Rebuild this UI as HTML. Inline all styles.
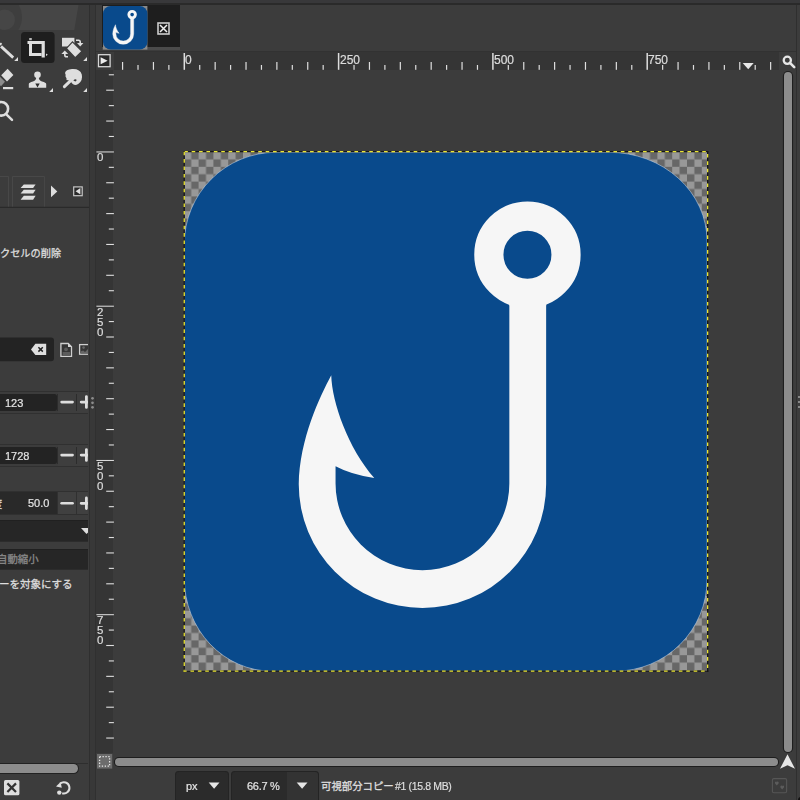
<!DOCTYPE html>
<html><head><meta charset="utf-8"><title>GIMP</title>
<style>
html,body{margin:0;padding:0;background:#3c3c3c;}
#r{position:relative;width:800px;height:800px;overflow:hidden;background:#3c3c3c;font-family:"Liberation Sans",sans-serif;}
#r div,#r svg{position:absolute;display:block;}
#r .t{white-space:nowrap;will-change:transform;-webkit-text-stroke:0.2px currentColor;}
</style></head><body><div id="r">
<div style="left:0px;top:0px;width:800px;height:3.3px;background:#38383a;"></div>
<div style="left:0px;top:3.2px;width:800px;height:1.5px;background:#2a2a2a;"></div>
<svg style="left:0px;top:4.5px;" width="90" height="25.5" viewBox="0 0 90 25.5"><path d="M0 0H78.5L74.2 25.5H0Z" fill="#464646"/><path d="M0 0H18.8A24.4 24.4 0 0 1 18 25.5H0Z" fill="#3e3e3e"/><circle cx="4.8" cy="14.7" r="10.2" fill="#464646"/></svg>
<svg style="left:0px;top:30px;" width="89" height="95" viewBox="0 30 89 95">
<rect x="21" y="32" width="33.6" height="31" rx="3.5" fill="#1e1e1e"/>
<!-- pencil/line -->
<path d="M1 46.4L13.2 57.6" stroke="#dedede" stroke-width="2.8" fill="none"/>
<path d="M-1 45.2L1.6 43.2" stroke="#dedede" stroke-width="2" fill="none"/>
<path d="M18 57V61H14.2Z" fill="#dedede"/>
<!-- crop -->
<rect x="29.2" y="38" width="2.6" height="2.2" fill="#b8b8b8"/>
<path d="M27.5 41H44.8V57.6H41.6V44H27.5Z" fill="#dedede"/>
<path d="M29 44H32V53H41.6V56H29Z" fill="#dedede"/>
<path d="M46 53.4L47.8 54.7L46 56Z" fill="#dedede"/>
<!-- transform -->
<rect x="62" y="37.8" width="12.4" height="8.7" fill="#dedede"/>
<path d="M72.5 41.8L82 51.3L75.3 57.8L66.4 48.4Z" fill="#dedede" stroke="#3c3c3c" stroke-width="1.2"/>
<path d="M76 40.2H78.6Q80.2 40.2 80.2 42V43.2" stroke="#dedede" stroke-width="1.6" fill="none"/>
<path d="M77 43H83.4L80.2 46.4Z" fill="#dedede"/>
<path d="M68 56.8H66.6Q64.8 56.8 64.8 55V53.8" stroke="#dedede" stroke-width="1.6" fill="none"/>
<path d="M61.4 54H68.2L64.8 50.6Z" fill="#dedede"/>
<path d="M87 57V61H83.2Z" fill="#dedede"/>
<!-- eraser -->
<path d="M7.6 68.8L13.4 75L7 81.4L1.2 75.2Z" fill="#dedede"/>
<path d="M-1 77L0.2 77L5 81.8L1.2 86L-1 85Z" fill="#8c8c8c"/>
<rect x="3" y="87" width="10.2" height="2.2" fill="#dedede"/>
<!-- stamp -->
<circle cx="37.5" cy="74.7" r="3.3" fill="#dedede"/>
<path d="M36.1 77Q36.6 80.4 33 81.5Q28.8 82.5 28.8 84V87.8H46.2V84Q46.2 82.5 42 81.5Q38.4 80.4 38.9 77Z" fill="#dedede"/>
<path d="M35.3 83.6H39.7L37.5 87.4Z" fill="#2a2a2a"/>
<path d="M53 88V92H49.2Z" fill="#dedede"/>
<!-- smudge -->
<path d="M65 73Q65.5 69.5 72 69Q80 68.5 81.8 74.5Q83 80.5 78.5 83.8Q74.5 86.3 72.2 83.5L70 80.5L66.5 80Q67 78 65.5 76.5Q66 74.5 65 73Z" fill="#dedede"/>
<path d="M64.4 86.6L73 78.4" stroke="#dedede" stroke-width="3" stroke-linecap="round" fill="none"/>
<path d="M73.4 80.6Q74.8 78.6 76.4 79.6Q77 81 75.4 81.6Z" fill="#3c3c3c"/>
<path d="M87 88V92H83.2Z" fill="#dedede"/>
<!-- zoom -->
<circle cx="1.3" cy="108.8" r="6.8" stroke="#dedede" stroke-width="2.6" fill="none"/>
<path d="M6.6 114.6L12 119.8" stroke="#dedede" stroke-width="2.5" stroke-linecap="round" fill="none"/>
</svg>
<div style="left:89px;top:4.5px;width:1px;height:795.5px;background:#2f2f2f;"></div>
<div style="left:90px;top:4.5px;width:5.3px;height:795.5px;background:#383838;"></div>
<div style="left:95.3px;top:4.5px;width:0.9px;height:795.5px;background:#303030;"></div>
<svg style="left:0px;top:170px;" width="89" height="45" viewBox="0 170 89 45">
<path d="M0 176.5H8.5V207" stroke="#484848" stroke-width="1" fill="none"/>
<path d="M12.5 207V176.5H44.4V207" stroke="#484848" stroke-width="1" fill="none"/>
<path d="M0 207.3H89" stroke="#2a2a2a" stroke-width="1.2"/>
<path d="M23.8 184.4H35.6L33.1 188.1H20.6Z" fill="#dedede"/>
<path d="M23.8 189.7H35.6L33.1 193.5H20.6Z" fill="#dedede"/>
<path d="M23.8 195.7H35.6L33.1 199.7H20.6Z" fill="#dedede"/>
<path d="M51 185.6L57.3 191.4L51 197.3Z" fill="#dedede"/>
<rect x="73.7" y="186.9" width="8.5" height="8.8" fill="#2a2a2a" stroke="#c8c8c8" stroke-width="1.2"/>
<path d="M75.6 191.3L80.4 188V194.6Z" fill="#dedede"/>
</svg>
<svg style="left:0.2px;top:246.17999999999998px;overflow:visible;" width="63" height="15" viewBox="0 -11.22 63 15"><text x="0" y="0" font-size="10.2" font-family="&quot;Liberation Sans&quot;, &quot;Noto Sans CJK JP&quot;, sans-serif" fill="#dcdcdc" stroke="#dcdcdc" stroke-width="0.3">クセルの削除</text></svg>
<svg style="left:0px;top:335px;" width="88" height="30" viewBox="0 335 88 30">
<path d="M0 337.5H51A3 3 0 0 1 54 340.5V358.3A3 3 0 0 1 51 361.3H0Z" fill="#232323"/>
<path d="M31 349.4L35.4 343.8H46.2V355H35.4Z" fill="#dedede"/>
<path d="M38.4 347.2L42.8 351.6M42.8 347.2L38.4 351.6" stroke="#232323" stroke-width="1.5"/>
<path d="M60.9 343.5H68.2L71.5 346.8V356.3H60.9Z" fill="#353535" stroke="#cfcfcf" stroke-width="1.3"/>
<path d="M68 343.3V347H71.7Z" fill="#d8d8d8"/>
<rect x="62.6" y="352" width="7.4" height="3.4" fill="#5c5c5c"/>
<circle cx="66" cy="349.3" r="1.9" fill="#5c5c5c"/>
<rect x="79.6" y="344.6" width="12" height="9.6" fill="#353535" stroke="#cfcfcf" stroke-width="1.3"/>
<circle cx="83.6" cy="347.6" r="1.3" fill="#666"/>
<path d="M80.6 353.4V351.6L83.2 350.6L85 352L88.5 348.6V353.4Z" fill="#666"/>
</svg>
<div style="left:0px;top:390.79999999999995px;width:88px;height:1.1px;background:#303030;"></div>
<div style="left:0px;top:412.9px;width:88px;height:1.1px;background:#303030;"></div>
<div style="left:57.9px;top:391.9px;width:30.1px;height:21px;background:#3e3e3e;"></div>
<div style="left:56.9px;top:393.79999999999995px;width:1px;height:17.4px;background:#2c2c2c;"></div>
<div style="left:76.1px;top:393.79999999999995px;width:1px;height:17.4px;background:#2c2c2c;"></div>
<div style="left:0px;top:393.79999999999995px;width:57px;height:17.4px;background:#232323;border-radius:0 2.5px 2.5px 0;"></div>
<div class="t" style="left:5px;top:397.59999999999997px;font-size:11px;line-height:11px;color:#e4e4e4;">123</div>
<svg style="left:58px;top:391.4px;" width="30" height="23" viewBox="58 391.4 30 23"><path d="M61.6 402.5H72.6" stroke="#dedede" stroke-width="2.6" stroke-linecap="round"/><path d="M81.2 402.5H88M86.4 397.0V407.79999999999995" stroke="#dedede" stroke-width="2.8" stroke-linecap="round" fill="none"/></svg>
<div style="left:0px;top:443.7px;width:88px;height:1.1px;background:#303030;"></div>
<div style="left:0px;top:465.8px;width:88px;height:1.1px;background:#303030;"></div>
<div style="left:57.9px;top:444.8px;width:30.1px;height:21px;background:#3e3e3e;"></div>
<div style="left:56.9px;top:446.7px;width:1px;height:17.4px;background:#2c2c2c;"></div>
<div style="left:76.1px;top:446.7px;width:1px;height:17.4px;background:#2c2c2c;"></div>
<div style="left:0px;top:446.7px;width:57px;height:17.4px;background:#232323;border-radius:0 2.5px 2.5px 0;"></div>
<div class="t" style="left:5px;top:450.5px;font-size:11px;line-height:11px;color:#e4e4e4;">1728</div>
<svg style="left:58px;top:444.3px;" width="30" height="23" viewBox="58 444.3 30 23"><path d="M61.6 455.40000000000003H72.6" stroke="#dedede" stroke-width="2.6" stroke-linecap="round"/><path d="M81.2 455.40000000000003H88M86.4 449.90000000000003V460.7" stroke="#dedede" stroke-width="2.8" stroke-linecap="round" fill="none"/></svg>
<svg style="left:90px;top:395px;" width="6" height="16" viewBox="0 0 6 16"><circle cx="2.5" cy="3.3000000000000114" r="1.35" fill="#8c8c8c"/><circle cx="2.5" cy="7.800000000000011" r="1.35" fill="#8c8c8c"/><circle cx="2.5" cy="12.300000000000011" r="1.35" fill="#8c8c8c"/></svg>
<div style="left:0px;top:490.8px;width:88px;height:1px;background:#303030;"></div>
<div style="left:0px;top:491.6px;width:57.5px;height:22.9px;background:#292929;"></div>
<div style="left:57.5px;top:492px;width:30.5px;height:22px;background:#404040;"></div>
<div style="left:57.3px;top:492px;width:1px;height:22px;background:#303030;"></div>
<div style="left:76px;top:492px;width:1px;height:22px;background:#303030;"></div>
<div style="left:0px;top:514px;width:88px;height:1px;background:#303030;"></div>
<div class="t" style="left:27.6px;top:497.6px;font-size:11px;line-height:11px;color:#e4e4e4;">50.0</div>
<svg style="left:58px;top:492px;" width="30.2" height="22" viewBox="58 492 30.2 22"><path d="M61.6 503.3H72.6" stroke="#dedede" stroke-width="2.6" stroke-linecap="round"/><path d="M81.2 503.3H88M86.4 498V508.6" stroke="#dedede" stroke-width="2.8" stroke-linecap="round" fill="none"/></svg>
<svg style="left:-8.2px;top:496.78px;overflow:visible;" width="13" height="15" viewBox="0 -11.22 13 15"><text x="0" y="0" font-size="10.2" font-family="&quot;Liberation Sans&quot;, &quot;Noto Sans CJK JP&quot;, sans-serif" fill="#dcdcdc" stroke="#dcdcdc" stroke-width="0.3">度</text></svg>
<div style="left:0px;top:520px;width:87.5px;height:22.3px;background:#262626;box-shadow:inset 0 1px 0 #202020, inset 0 -1px 0 #2c2c2c;"></div>
<svg style="left:78px;top:525px;" width="10.2" height="12" viewBox="78 525 10.2 12"><path d="M81 528.1H92L86.5 534Z" fill="#dedede"/></svg>
<div style="left:0px;top:548.8px;width:87.5px;height:21.5px;background:#262626;box-shadow:inset 0 1px 0 #202020, inset 0 -1px 0 #2c2c2c;"></div>
<svg style="left:-3.4px;top:551.76px;overflow:visible;" width="44" height="15" viewBox="0 -11.440000000000001 44 15"><text x="0" y="0" font-size="10.4" font-family="&quot;Liberation Sans&quot;, &quot;Noto Sans CJK JP&quot;, sans-serif" fill="#888888" stroke="#888888" stroke-width="0.3">自動縮小</text></svg>
<svg style="left:-1.4px;top:576.25px;overflow:visible;" width="75" height="15" viewBox="0 -11.55 75 15"><text x="0" y="0" font-size="10.5" font-family="&quot;Liberation Sans&quot;, &quot;Noto Sans CJK JP&quot;, sans-serif" fill="#dedede" stroke="#dedede" stroke-width="0.3">ーを対象にする</text></svg>
<div style="left:0px;top:763px;width:87.5px;height:1px;background:#2e2e2e;"></div>
<div style="left:-6px;top:763.8px;width:83.6px;height:9.6px;background:#8c8c8c;border-radius:5px;box-shadow:0 0 0 1px #222;"></div>
<svg style="left:0px;top:776px;" width="89" height="24" viewBox="0 776 89 24">
<rect x="4" y="780" width="15.4" height="15.2" rx="1.5" fill="#dedede"/>
<path d="M7.4 783.4L16 792M16 783.4L7.4 792" stroke="#333" stroke-width="2.2"/>
<path d="M60.2 783.6A5.6 5.6 0 1 1 62.2 793.2" stroke="#dedede" stroke-width="2" fill="none"/>
<path d="M56 786.6L60.6 782L61.8 787.8Z" fill="#dedede"/>
<circle cx="59.3" cy="792.6" r="2.2" fill="#dedede"/>
</svg>
<div style="left:102px;top:4.6px;width:77.7px;height:42.7px;background:#1e1e1e;"></div>
<div style="left:102px;top:47.2px;width:77.7px;height:3.1px;background:#4b4b4b;"></div>
<div style="left:96.2px;top:51px;width:700px;height:0.9px;background:#323232;"></div>
<svg style="left:155px;top:20px;" width="18" height="18" viewBox="0 0 18 18"><rect x="3" y="3" width="11" height="11" fill="none" stroke="#cdcdcd" stroke-width="1.6"/><path d="M5 5L12 12M12 5L5 12" stroke="#f0f0f0" stroke-width="1.5"/></svg>
<div style="left:113.5px;top:51.8px;width:665.7px;height:18.3px;background:#353535;"></div>
<div style="left:96.2px;top:70.1px;width:17.3px;height:683px;background:#353535;"></div>
<svg style="left:96px;top:52px;" width="18" height="18" viewBox="0 0 18 18"><rect x="2.5" y="2.7" width="11.6" height="12" fill="#2a2a2a" stroke="#d8d8d8" stroke-width="1.3"/><path d="M4.6 5.2L11.6 8.8L4.6 12.2Z" fill="#ececec"/></svg>
<svg style="left:96px;top:51px;" width="700" height="20" viewBox="96 51 700 20"><rect x="121.98" y="62" width="1.2" height="7.8" fill="#dedede"/><rect x="137.41" y="65" width="1.2" height="4.8" fill="#dedede"/><rect x="152.84" y="62" width="1.2" height="7.8" fill="#dedede"/><rect x="168.27" y="65" width="1.2" height="4.8" fill="#dedede"/><rect x="183.55" y="53" width="1.5" height="16.8" fill="#dedede"/><rect x="199.13" y="65" width="1.2" height="4.8" fill="#dedede"/><rect x="214.56" y="62" width="1.2" height="7.8" fill="#dedede"/><rect x="229.99" y="65" width="1.2" height="4.8" fill="#dedede"/><rect x="245.42" y="62" width="1.2" height="7.8" fill="#dedede"/><rect x="260.85" y="65" width="1.2" height="4.8" fill="#dedede"/><rect x="276.28" y="62" width="1.2" height="7.8" fill="#dedede"/><rect x="291.71" y="65" width="1.2" height="4.8" fill="#dedede"/><rect x="307.14" y="62" width="1.2" height="7.8" fill="#dedede"/><rect x="322.57" y="65" width="1.2" height="4.8" fill="#dedede"/><rect x="337.85" y="53" width="1.5" height="16.8" fill="#dedede"/><rect x="353.43" y="65" width="1.2" height="4.8" fill="#dedede"/><rect x="368.86" y="62" width="1.2" height="7.8" fill="#dedede"/><rect x="384.29" y="65" width="1.2" height="4.8" fill="#dedede"/><rect x="399.72" y="62" width="1.2" height="7.8" fill="#dedede"/><rect x="415.15" y="65" width="1.2" height="4.8" fill="#dedede"/><rect x="430.58" y="62" width="1.2" height="7.8" fill="#dedede"/><rect x="446.01" y="65" width="1.2" height="4.8" fill="#dedede"/><rect x="461.44" y="62" width="1.2" height="7.8" fill="#dedede"/><rect x="476.87" y="65" width="1.2" height="4.8" fill="#dedede"/><rect x="492.15" y="53" width="1.5" height="16.8" fill="#dedede"/><rect x="507.73" y="65" width="1.2" height="4.8" fill="#dedede"/><rect x="523.16" y="62" width="1.2" height="7.8" fill="#dedede"/><rect x="538.59" y="65" width="1.2" height="4.8" fill="#dedede"/><rect x="554.02" y="62" width="1.2" height="7.8" fill="#dedede"/><rect x="569.45" y="65" width="1.2" height="4.8" fill="#dedede"/><rect x="584.88" y="62" width="1.2" height="7.8" fill="#dedede"/><rect x="600.31" y="65" width="1.2" height="4.8" fill="#dedede"/><rect x="615.74" y="62" width="1.2" height="7.8" fill="#dedede"/><rect x="631.17" y="65" width="1.2" height="4.8" fill="#dedede"/><rect x="646.45" y="53" width="1.5" height="16.8" fill="#dedede"/><rect x="662.03" y="65" width="1.2" height="4.8" fill="#dedede"/><rect x="677.46" y="62" width="1.2" height="7.8" fill="#dedede"/><rect x="692.89" y="65" width="1.2" height="4.8" fill="#dedede"/><rect x="708.32" y="62" width="1.2" height="7.8" fill="#dedede"/><rect x="723.75" y="65" width="1.2" height="4.8" fill="#dedede"/><rect x="739.18" y="62" width="1.2" height="7.8" fill="#dedede"/><rect x="754.61" y="65" width="1.2" height="4.8" fill="#dedede"/><rect x="770.04" y="62" width="1.2" height="7.8" fill="#dedede"/><path d="M742.7 62.9H753.7L748.2 69.2Z" fill="#e6e6e6"/></svg>
<div class="t" style="left:185.4px;top:54.0px;font-size:12px;line-height:12px;color:#dcdcdc;letter-spacing:0px;">0</div>
<div class="t" style="left:339.70000000000005px;top:54.0px;font-size:12px;line-height:12px;color:#dcdcdc;letter-spacing:0px;">250</div>
<div class="t" style="left:494.00000000000006px;top:54.0px;font-size:12px;line-height:12px;color:#dcdcdc;letter-spacing:0px;">500</div>
<div class="t" style="left:648.3000000000001px;top:54.0px;font-size:12px;line-height:12px;color:#dcdcdc;letter-spacing:0px;">750</div>
<svg style="left:96px;top:70.1px;" width="18" height="683" viewBox="96 70.1 18 683"><rect x="108.8" y="74.33" width="5.1" height="1.1" fill="#dedede"/><rect x="106.2" y="89.75" width="7.7" height="1.1" fill="#dedede"/><rect x="108.8" y="105.18" width="5.1" height="1.1" fill="#dedede"/><rect x="106.2" y="120.60" width="7.7" height="1.1" fill="#dedede"/><rect x="108.8" y="136.03" width="5.1" height="1.1" fill="#dedede"/><rect x="96.4" y="151.55" width="17.5" height="1" fill="#e2e2e2"/><rect x="108.8" y="166.88" width="5.1" height="1.1" fill="#dedede"/><rect x="106.2" y="182.30" width="7.7" height="1.1" fill="#dedede"/><rect x="108.8" y="197.73" width="5.1" height="1.1" fill="#dedede"/><rect x="106.2" y="213.15" width="7.7" height="1.1" fill="#dedede"/><rect x="108.8" y="228.58" width="5.1" height="1.1" fill="#dedede"/><rect x="106.2" y="244.00" width="7.7" height="1.1" fill="#dedede"/><rect x="108.8" y="259.43" width="5.1" height="1.1" fill="#dedede"/><rect x="106.2" y="274.85" width="7.7" height="1.1" fill="#dedede"/><rect x="108.8" y="290.27" width="5.1" height="1.1" fill="#dedede"/><rect x="96.4" y="305.80" width="17.5" height="1" fill="#e2e2e2"/><rect x="108.8" y="321.12" width="5.1" height="1.1" fill="#dedede"/><rect x="106.2" y="336.55" width="7.7" height="1.1" fill="#dedede"/><rect x="108.8" y="351.98" width="5.1" height="1.1" fill="#dedede"/><rect x="106.2" y="367.40" width="7.7" height="1.1" fill="#dedede"/><rect x="108.8" y="382.82" width="5.1" height="1.1" fill="#dedede"/><rect x="106.2" y="398.25" width="7.7" height="1.1" fill="#dedede"/><rect x="108.8" y="413.68" width="5.1" height="1.1" fill="#dedede"/><rect x="106.2" y="429.10" width="7.7" height="1.1" fill="#dedede"/><rect x="108.8" y="444.52" width="5.1" height="1.1" fill="#dedede"/><rect x="96.4" y="460.05" width="17.5" height="1" fill="#e2e2e2"/><rect x="108.8" y="475.38" width="5.1" height="1.1" fill="#dedede"/><rect x="106.2" y="490.80" width="7.7" height="1.1" fill="#dedede"/><rect x="108.8" y="506.23" width="5.1" height="1.1" fill="#dedede"/><rect x="106.2" y="521.65" width="7.7" height="1.1" fill="#dedede"/><rect x="108.8" y="537.07" width="5.1" height="1.1" fill="#dedede"/><rect x="106.2" y="552.50" width="7.7" height="1.1" fill="#dedede"/><rect x="108.8" y="567.93" width="5.1" height="1.1" fill="#dedede"/><rect x="106.2" y="583.35" width="7.7" height="1.1" fill="#dedede"/><rect x="108.8" y="598.77" width="5.1" height="1.1" fill="#dedede"/><rect x="96.4" y="614.30" width="17.5" height="1" fill="#e2e2e2"/><rect x="108.8" y="629.62" width="5.1" height="1.1" fill="#dedede"/><rect x="106.2" y="645.05" width="7.7" height="1.1" fill="#dedede"/><rect x="108.8" y="660.48" width="5.1" height="1.1" fill="#dedede"/><rect x="106.2" y="675.90" width="7.7" height="1.1" fill="#dedede"/><rect x="108.8" y="691.32" width="5.1" height="1.1" fill="#dedede"/><rect x="106.2" y="706.75" width="7.7" height="1.1" fill="#dedede"/><rect x="108.8" y="722.18" width="5.1" height="1.1" fill="#dedede"/><rect x="106.2" y="737.60" width="7.7" height="1.1" fill="#dedede"/></svg>
<div class="t" style="left:97.1px;top:152.35000000000002px;font-size:11.5px;line-height:11.5px;color:#dcdcdc;">0</div>
<div class="t" style="left:97.1px;top:306.6px;font-size:11.5px;line-height:11.5px;color:#dcdcdc;">2</div>
<div class="t" style="left:97.1px;top:316.75px;font-size:11.5px;line-height:11.5px;color:#dcdcdc;">5</div>
<div class="t" style="left:97.1px;top:326.90000000000003px;font-size:11.5px;line-height:11.5px;color:#dcdcdc;">0</div>
<div class="t" style="left:97.1px;top:460.85px;font-size:11.5px;line-height:11.5px;color:#dcdcdc;">5</div>
<div class="t" style="left:97.1px;top:471.0px;font-size:11.5px;line-height:11.5px;color:#dcdcdc;">0</div>
<div class="t" style="left:97.1px;top:481.15000000000003px;font-size:11.5px;line-height:11.5px;color:#dcdcdc;">0</div>
<div class="t" style="left:97.1px;top:615.0999999999999px;font-size:11.5px;line-height:11.5px;color:#dcdcdc;">7</div>
<div class="t" style="left:97.1px;top:625.2499999999999px;font-size:11.5px;line-height:11.5px;color:#dcdcdc;">5</div>
<div class="t" style="left:97.1px;top:635.3999999999999px;font-size:11.5px;line-height:11.5px;color:#dcdcdc;">0</div>
<svg style="left:96px;top:753px;" width="18" height="17" viewBox="0 0 18 17"><rect x="1" y="1" width="15.2" height="14.6" fill="#6c6c6c"/><rect x="3.6" y="3.6" width="10" height="9.6" fill="none" stroke="#e8e8e8" stroke-width="1.3" stroke-dasharray="1.3 1.6"/></svg>
<div style="left:114.8px;top:757.8px;width:663.2px;height:7.8px;background:#8c8c8c;border-radius:5px;box-shadow:0 0 0 1.1px #1e1e1e;"></div>
<div style="left:783.8px;top:72px;width:7.8px;height:679.8px;background:#8c8c8c;border-radius:5px;box-shadow:0 0 0 1.1px #1e1e1e;"></div>
<svg style="left:781px;top:54px;" width="16" height="16" viewBox="0 0 16 16"><circle cx="6.3" cy="6.3" r="3.6" fill="none" stroke="#e6e6e6" stroke-width="2.3"/><path d="M9.2 9.2L13.2 13.2" stroke="#e6e6e6" stroke-width="2.6" stroke-linecap="round"/></svg>
<svg style="left:779px;top:753px;" width="18" height="17" viewBox="0 0 18 17"><path d="M8.5 1.3L16 15.8L8.5 12.2L1 15.8Z" fill="#e6e6e6"/></svg>
<svg style="left:770px;top:776px;" width="20" height="20" viewBox="0 0 20 20"><rect x="2.4" y="2.6" width="14.2" height="14.2" rx="1.5" fill="none" stroke="#565656" stroke-width="1.1"/><path d="M6.8 9.6L4.9 7.2Q4.7 5.6 6 5.6Q6.8 5.6 6.8 6.4Q6.8 5.6 7.7 5.6Q9 5.6 8.7 7.2Z" fill="#5c5c5c"/><path d="M12.2 13.6L10.3 11.2Q10.1 9.6 11.4 9.6Q12.2 9.6 12.2 10.4Q12.2 9.6 13.1 9.6Q14.4 9.6 14.1 11.2Z" fill="#5c5c5c"/></svg>
<div style="left:796px;top:4.5px;width:1px;height:795.5px;background:#2f2f2f;"></div>
<div style="left:797.6px;top:396.09999999999997px;width:2.6px;height:2.2px;background:#a0a0a0;border-radius:1px;"></div>
<div style="left:797.6px;top:400.9px;width:2.6px;height:2.2px;background:#a0a0a0;border-radius:1px;"></div>
<div style="left:797.6px;top:405.7px;width:2.6px;height:2.2px;background:#a0a0a0;border-radius:1px;"></div>
<div style="left:797.5px;top:797px;width:6px;height:6px;background:#111;border-radius:50%;"></div>
<div style="left:175.4px;top:770.5px;width:54px;height:32px;background:#2b2b2b;border-radius:4px;box-shadow:inset 0 0 0 1px #242424;"></div>
<div style="left:231.2px;top:770.5px;width:87.6px;height:32px;background:#2b2b2b;border-radius:4px;box-shadow:inset 0 0 0 1px #242424;"></div>
<div style="left:286.8px;top:771.5px;width:31px;height:32px;background:#333;border-radius:0 3px 0 0;"></div>
<div class="t" style="left:185.6px;top:780.6px;font-size:11px;line-height:11px;color:#e4e4e4;letter-spacing:-0.2px;">px</div>
<div class="t" style="left:246.6px;top:780.6px;font-size:11px;line-height:11px;color:#e4e4e4;letter-spacing:-0.3px;">66.7 %</div>
<svg style="left:205px;top:780px;" width="18" height="12" viewBox="0 0 18 12"><path d="M3.7 2.5H14.5L9.1 8.8Z" fill="#e6e6e6"/></svg>
<svg style="left:292.5px;top:780px;" width="18" height="12" viewBox="0 0 18 12"><path d="M3.7 2.5H14.5L9.1 8.8Z" fill="#e6e6e6"/></svg>
<svg style="left:321px;top:778.76px;overflow:visible;" width="73" height="15" viewBox="0 -11.440000000000001 73 15"><text x="0" y="0" font-size="10.4" font-family="&quot;Liberation Sans&quot;, &quot;Noto Sans CJK JP&quot;, sans-serif" fill="#dedede" stroke="#dedede" stroke-width="0.3">可視部分コピー</text></svg>
<div class="t" style="left:394.6px;top:780.9px;font-size:10.5px;line-height:10.5px;color:#dedede;letter-spacing:-0.35px;">#1 (15.8 MB)</div>
<svg style="left:184.25px;top:151.7px;" width="523.4" height="519.5" viewBox="0 0 523.4 519.5"><defs><pattern id="ck" x="-0.2" y="0" width="14.8" height="14.8" patternUnits="userSpaceOnUse"><rect width="14.8" height="14.8" fill="#989898"/><rect x="7.4" width="7.4" height="7.4" fill="#676767"/><rect y="7.4" width="7.4" height="7.4" fill="#676767"/></pattern></defs><rect width="523.4" height="519.5" fill="url(#ck)"/><path d="M92 0.3H425.4A97.7 88.7 0 0 1 523.1 89V427.5A91.7 91.7 0 0 1 431.4 519.2H88A87.7 92.7 0 0 1 0.3 426.5V92A91.7 91.7 0 0 1 92 0.3Z" fill="#094a8c" stroke="rgba(205,218,232,0.6)" stroke-width="0.9"/><g transform="translate(-184.25,-151.7)"><path d="M509.6 306Q509.6 302 506.4 300.5L528 290L549.5 300.5Q546.4 302 546.4 306V484A123.7 123.7 0 0 1 299 484C299.5 439.3 320.4 395.5 331.5 374.9C332.2 402 348.4 447.9 374.5 477.6Q352 474.5 335.8 465.9V483A86.9 86.9 0 0 0 509.6 483Z" fill="#f6f6f6"/><circle cx="527.7" cy="254.4" r="38.6" fill="none" stroke="#f6f6f6" stroke-width="29.2"/></g></svg>
<svg style="left:180px;top:148px;" width="532" height="527" viewBox="180 148 532 527"><path d="M183.55 151.7L708.35 151.7" stroke="#171717" stroke-width="1.3" fill="none"/><path d="M183.55 151.7L708.35 151.7" stroke="#ebe632" stroke-width="1.3" stroke-dasharray="3.6 3.8" stroke-dashoffset="-0.7" fill="none"/><path d="M184.25 151.0L184.25 671.9000000000001" stroke="#171717" stroke-width="1.3" fill="none"/><path d="M184.25 151.0L184.25 671.9000000000001" stroke="#ebe632" stroke-width="1.3" stroke-dasharray="3.6 3.8" stroke-dashoffset="-0.7" fill="none"/><path d="M707.65 151.0L707.65 671.9000000000001" stroke="#171717" stroke-width="1.3" fill="none"/><path d="M707.65 151.0L707.65 671.9000000000001" stroke="#ebe632" stroke-width="1.3" stroke-dasharray="3.6 3.8" stroke-dashoffset="-2.9" fill="none"/><path d="M183.55 671.2L708.35 671.2" stroke="#171717" stroke-width="1.3" fill="none"/><path d="M183.55 671.2L708.35 671.2" stroke="#ebe632" stroke-width="1.3" stroke-dasharray="3.6 3.8" stroke-dashoffset="0.5" fill="none"/></svg>
<svg style="left:103.2px;top:6px;" width="44.4" height="43.6" viewBox="0 0 44.4 43.6"><rect x="0" y="0" width="44.4" height="43.6" fill="#8a8a8a"/><rect x="0" y="0" width="44.4" height="43.6" rx="7.8" ry="7.6" fill="#094a8c"/><g transform="scale(0.08483,0.08393) translate(-184.25,-151.7)" stroke="#f6f6f6" stroke-width="5"><path d="M509.6 306Q509.6 302 506.4 300.5L528 290L549.5 300.5Q546.4 302 546.4 306V484A123.7 123.7 0 0 1 299 484C299.5 439.3 320.4 395.5 331.5 374.9C332.2 402 348.4 447.9 374.5 477.6Q352 474.5 335.8 465.9V483A86.9 86.9 0 0 0 509.6 483Z" fill="#f6f6f6"/><circle cx="527.7" cy="254.4" r="38.6" fill="none" stroke="#f6f6f6" stroke-width="34"/></g></svg>
</div></body></html>
